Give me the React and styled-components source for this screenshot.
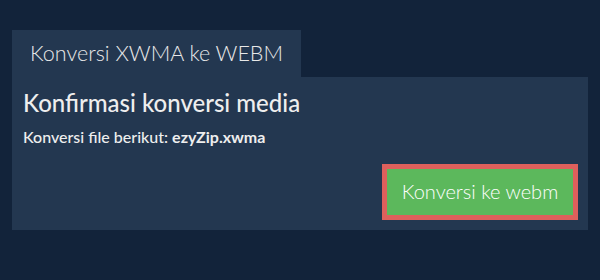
import React from "react";
import styled, { createGlobalStyle } from "styled-components";

const Global = createGlobalStyle`
  html, body { margin: 0; padding: 0; background: #12233a; }
  body { font-family: Lato, "Noto Sans", sans-serif; }
`;

const Page = styled.div`
  width: 600px;
  height: 280px;
  box-sizing: border-box;
  padding: 30px 12px 0 12px;
  background: #12233a;
`;

const Tab = styled.div`
  display: inline-flex;
  align-items: center;
  box-sizing: border-box;
  width: 289px;
  height: 47px;
  padding: 0 0 2px 18px;
  background: #233750;
  color: #e8e8e8;
  font-weight: 300;
  font-size: 21.5px;
`;

const Panel = styled.div`
  display: flex;
  flex-direction: column;
  box-sizing: border-box;
  width: 576px;
  height: 153px;
  padding: 12px 10px 10px 11px;
  background: #233750;
  color: #eeeeee;
`;

const Heading = styled.h1`
  margin: 0;
  font-size: 24px;
  font-weight: 500;
  line-height: 28px;
`;

const Sub = styled.p`
  margin: 11px 0 0;
  font-size: 16px;
  font-weight: 500;
  line-height: 18px;
`;

const Bold = styled.b`
  font-weight: 700;
`;

const Actions = styled.div`
  margin-top: auto;
  display: flex;
  justify-content: flex-end;
`;

const Button = styled.button`
  box-sizing: border-box;
  width: 196px;
  height: 56px;
  border: 5px solid #de605c;
  background: #5cb85c;
  color: #ffffff;
  font-family: Lato, "Noto Sans", sans-serif;
  font-size: 20px;
  font-weight: 300;
  padding: 0 0 2px;
  cursor: pointer;
`;

export default function App() {
  return (
    <Page>
      <Global />
      <Tab>Konversi XWMA ke WEBM</Tab>
      <Panel>
        <Heading>Konfirmasi konversi media</Heading>
        <Sub>
          Konversi file berikut: <Bold>ezyZip.xwma</Bold>
        </Sub>
        <Actions>
          <Button>Konversi ke webm</Button>
        </Actions>
      </Panel>
    </Page>
  );
}
